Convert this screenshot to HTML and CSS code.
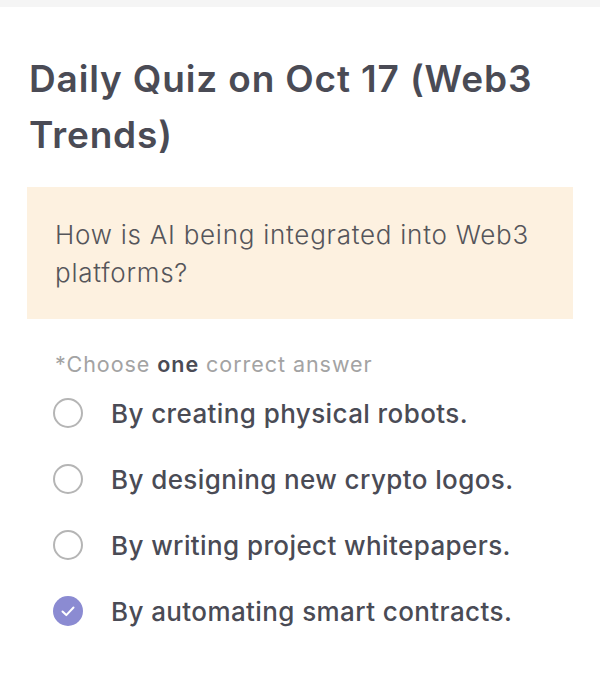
FILE: index.html
```html
<!DOCTYPE html>
<html lang="en">
<head>
<meta charset="utf-8">
<title>Daily Quiz</title>
<link rel="stylesheet" href="styles.css">
</head>
<body>
<div class="topbar"></div>
<main class="quiz">
  <h1 class="title">Daily Quiz on Oct 17 (Web3 Trends)</h1>
  <div class="question">How is AI being integrated into Web3 platforms?</div>
  <p class="hint">*Choose <b>one</b> correct answer</p>
  <ul class="options">
    <li class="option"><span class="radio"></span><span class="label">By creating physical robots.</span></li>
    <li class="option"><span class="radio"></span><span class="label">By designing new crypto logos.</span></li>
    <li class="option"><span class="radio"></span><span class="label">By writing project whitepapers.</span></li>
    <li class="option selected"><span class="radio checked"><svg viewBox="0 0 30 30" width="30" height="30"><path d="M9.5 15.5l3.8 3.6 7.2-7.6" fill="none" stroke="#fff" stroke-width="2" stroke-linecap="round" stroke-linejoin="round"/></svg></span><span class="label">By automating smart contracts.</span></li>
  </ul>
</main>
</body>
</html>
```
FILE: styles.css
```css
* { box-sizing: border-box; }
html, body { margin: 0; padding: 0; background: #fff; }
body { font-family: Inter, "Open Sans", sans-serif; color: #4a4b55; }
.topbar { height: 7px; background: #f5f5f5; }
.quiz { padding: 0 27px; }
.title {
  margin: 44px 0 0 2px;
  font-size: 37px;
  line-height: 56px;
  font-weight: 600;
  color: #4a4b55;
  letter-spacing: 0.85px;
}
.question {
  margin-top: 24px;
  background: #fdf1e0;
  padding: 29px 16px 25px 28px;
  font-size: 26px;
  line-height: 38px;
  font-weight: 300;
  color: #55555a;
  letter-spacing: 0.75px;
  height: 132px;
}
.hint {
  margin: 32px 0 0 28px;
  font-size: 21.5px;
  line-height: 26px;
  color: #a3a3a3;
  letter-spacing: 0.95px;
}
.hint b { color: #4a4b55; font-weight: 600; }
.options { list-style: none; margin: 3px 0 0 26px; padding: 0; }
.option { display: flex; align-items: center; height: 66px; }
.radio {
  width: 30px; height: 30px; border-radius: 50%;
  border: 2px solid #b5b5b5; flex: none;
  display: flex; align-items: center; justify-content: center;
  margin-right: 28px;
}
.radio.checked { border: none; background: #8b8bd2; }
.label { font-size: 26px; font-weight: 500; color: #4a4b55; letter-spacing: 0.4px; }
```
